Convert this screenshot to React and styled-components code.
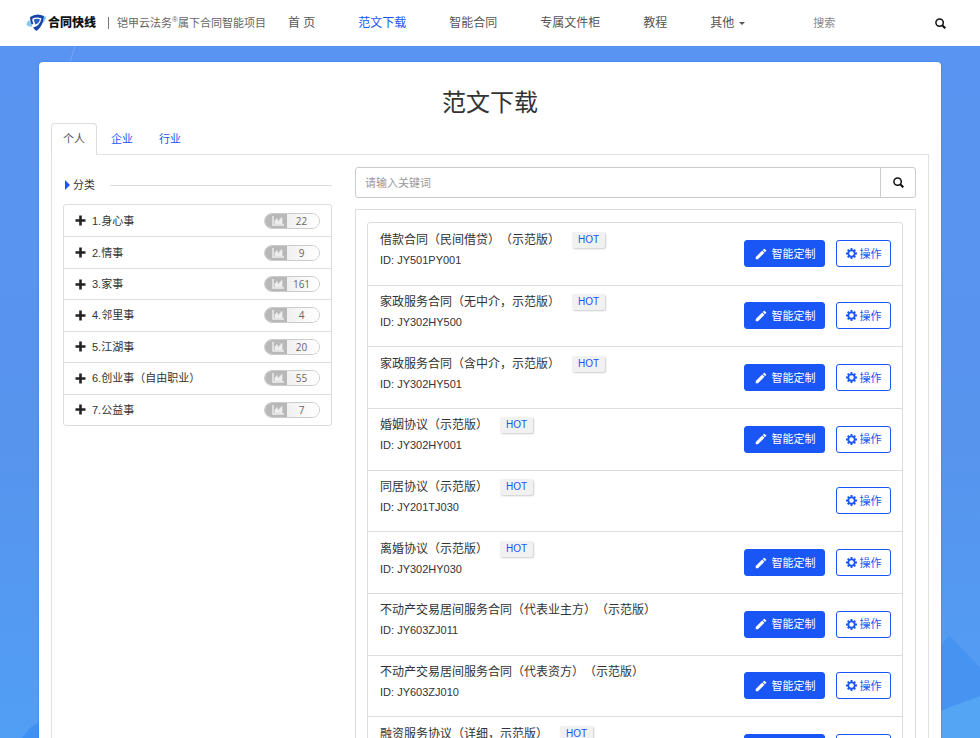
import React from "react";
import styled, { createGlobalStyle } from "styled-components";
import { MdEdit } from "react-icons/md";

const categories = [
  { name: "1.身心事", count: 22 },
  { name: "2.情事", count: 9 },
  { name: "3.家事", count: 161 },
  { name: "4.邻里事", count: 4 },
  { name: "5.江湖事", count: 20 },
  { name: "6.创业事（自由职业）", count: 55 },
  { name: "7.公益事", count: 7 },
];

const documents = [
  { title: "借款合同（民间借贷）（示范版）", id: "JY501PY001", hot: true, custom: true },
  { title: "家政服务合同（无中介，示范版）", id: "JY302HY500", hot: true, custom: true },
  { title: "家政服务合同（含中介，示范版）", id: "JY302HY501", hot: true, custom: true },
  { title: "婚姻协议（示范版）", id: "JY302HY001", hot: true, custom: true },
  { title: "同居协议（示范版）", id: "JY201TJ030", hot: true, custom: false },
  { title: "离婚协议（示范版）", id: "JY302HY030", hot: true, custom: true },
  { title: "不动产交易居间服务合同（代表业主方）（示范版）", id: "JY603ZJ011", hot: false, custom: true },
  { title: "不动产交易居间服务合同（代表资方）（示范版）", id: "JY603ZJ010", hot: false, custom: true },
  { title: "融资服务协议（详细，示范版）", hot: true, custom: true },
];

const SearchIcon = () => (
  <svg width="11" height="11" viewBox="0 0 11 11" fill="none" stroke="currentColor" aria-hidden="true">
    <circle cx="4.6" cy="4.6" r="3.7" strokeWidth="1.5" />
    <path d="M7.3 7.3 L10.3 10.3" strokeWidth="2.1" />
  </svg>
);

const PlusIcon = () => (
  <svg width="11" height="11" viewBox="0 0 11 11" fill="none" stroke="#222" aria-hidden="true">
    <path d="M5.5 0.5v10M0.5 5.5h10" strokeWidth="2.6" />
  </svg>
);

const GearIcon = () => (
  <svg width="11" height="11" viewBox="0 0 22 22" fill="none" stroke="currentColor" aria-hidden="true">
    <circle cx="11" cy="11" r="6.4" strokeWidth="3.6" />
    <path
      d="M11 0v4M11 18v4M0 11h4M18 11h4M3.4 3.4l2.6 2.6M16 16l2.6 2.6M18.6 3.4l-2.6 2.6M6 16l-2.6 2.6"
      strokeWidth="3.8"
    />
  </svg>
);

const ChartIcon = () => (
  <svg width="12" height="10" viewBox="0 0 12 10" aria-hidden="true">
    <path d="M1 0v9h11" fill="none" stroke="currentColor" strokeWidth="1.4" />
    <path d="M2.6 8V4H4V2.4H5.6V4.4H7.4V3H8.6V1.6H10.4V8Z" fill="currentColor" />
  </svg>
);

const LogoMark = () => (
  <svg width="22" height="18" viewBox="0 0 44 36" aria-hidden="true">
    <path d="M6 12 Q-3 21 4 24 Q8 26 13 25 L10 18Z" fill="#86c8f4" />
    <path d="M35 4 Q42 5 40 9 Q37 16 31 20 L33 9Z" fill="#86c8f4" />
    <path d="M8 6 Q21 -3 36 4 L34 15 Q31 26 21 34 Q17 31 14 27 Q27 25 31 9 Q22 5 13 9 Q12 15 15 20 L11 21 Q8 15 8 6Z" fill="#1746a8" />
    <path d="M16 11 Q22 8 28 11 Q26 19 19 21 Q16 17 16 11Z" fill="#2a5fc2" />
  </svg>
);

const App = () => {
  return (
    <>
      <GlobalStyle />
      <Header>
        <Brand href="#">
          <LogoMark />
          <BrandName>合同快线</BrandName>
        </Brand>
        <Slogan>
          铠甲云法务<Sup>®</Sup>属下合同智能项目
        </Slogan>
        <Nav aria-label="主导航">
          <NavLink href="#">首 页</NavLink>
          <NavLink href="#" $active>范文下载</NavLink>
          <NavLink href="#">智能合同</NavLink>
          <NavLink href="#">专属文件柜</NavLink>
          <NavLink href="#">教程</NavLink>
          <NavLink href="#">其他<Caret /></NavLink>
        </Nav>
        <SiteSearch role="search">
          <SiteInput type="text" placeholder="搜索" aria-label="搜索" />
          <IconButton type="submit" aria-label="搜索"><SearchIcon /></IconButton>
        </SiteSearch>
      </Header>

      <Main>
        <Backdrop viewBox="0 0 980 692" preserveAspectRatio="none" aria-hidden="true">
          <path d="M940 602 L949 589 L980 622 V692 H940Z" fill="#4793f2" />
          <path d="M940 665 L980 650 V692 H940Z" fill="#54a6f5" />
          <path d="M22 692 L30 682 L39 676 V692Z" fill="#3f90f5" />
          <path d="M70 16 L75 0" stroke="#74a9f5" />
        </Backdrop>
        <Card>
          <Title>范文下载</Title>
          <Tabs>
            <Tab href="#" $active>个人</Tab>
            <Tab href="#">企业</Tab>
            <Tab href="#">行业</Tab>
          </Tabs>
          <Panel>
            <Sidebar>
              <Legend>
                <Arrow />
                分类
                <Rule />
              </Legend>
              <CategoryList>
                {categories.map((item) => (
                  <Category key={item.name}>
                    <PlusIcon />
                    <CategoryName>{item.name}</CategoryName>
                    <Counter>
                      <CounterIcon><ChartIcon /></CounterIcon>
                      <CounterValue>{item.count}</CounterValue>
                    </Counter>
                  </Category>
                ))}
              </CategoryList>
            </Sidebar>

            <Content>
              <KeywordSearch role="search">
                <KeywordInput type="text" placeholder="请输入关键词" aria-label="请输入关键词" />
                <KeywordButton type="submit" aria-label="搜索"><SearchIcon /></KeywordButton>
              </KeywordSearch>
              <Results>
                <DocumentList>
                  {documents.map((doc) => (
                    <DocumentRow key={doc.title}>
                      <DocumentInfo>
                        <DocumentTitle>
                          {doc.title}
                          {doc.hot && <Hot>HOT</Hot>}
                        </DocumentTitle>
                        {doc.id && <DocumentId>ID: {doc.id}</DocumentId>}
                      </DocumentInfo>
                      {doc.custom && (
                        <Button type="button" $primary>
                          <MdEdit size={14} />
                          智能定制
                        </Button>
                      )}
                      <Button type="button">
                        <GearIcon />
                        操作
                      </Button>
                    </DocumentRow>
                  ))}
                </DocumentList>
              </Results>
            </Content>
          </Panel>
        </Card>
      </Main>
    </>
  );
};

export default App;

const GlobalStyle = createGlobalStyle`
  * {
    box-sizing: border-box;
  }

  html {
    scrollbar-width: none;
  }

  body {
    margin: 0;
    color: #333;
    font-family: "Liberation Sans", "Noto Sans CJK SC", sans-serif;
    font-size: 11px;
    line-height: 16px;
    text-spacing-trim: space-all;
  }

  button,
  input {
    font: inherit;
  }

  a {
    text-decoration: none;
  }
`

const Header = styled.header`
  display: flex;
  align-items: center;
  height: 46px;
  padding: 0 24px 0 26px;
  background: #fff;
  white-space: nowrap;
`

const Brand = styled.a`
  display: flex;
  align-items: center;
  color: #111;
`

const BrandName = styled.span`
  font-size: 12px;
  font-weight: 900;
`

const Slogan = styled.span`
  margin-left: 12px;
  padding-left: 8px;
  border-left: 1px solid #777;
  color: #666;
  line-height: 12px;
`

const Sup = styled.sup`
  font-size: 8px;
  line-height: 0;
`

const Nav = styled.nav`
  display: flex;
  gap: 43px;
  margin-left: 22px;
`

const NavLink = styled.a`
  display: flex;
  align-items: center;
  color: ${({ $active }) => ($active ? "#1a56f5" : "#555")};
  font-size: 12px;
  line-height: 20px;
`

const Caret = styled.span`
  margin-left: 5px;
  border-top: 3px solid #555;
  border-right: 3px solid transparent;
  border-left: 3px solid transparent;
`

const SiteSearch = styled.form`
  display: flex;
  flex: 1;
  align-items: center;
  min-width: 0;
  margin-left: 68px;
`

const SiteInput = styled.input`
  flex: 1;
  min-width: 0;
  padding: 0;
  border: 0;
  outline: 0;
  background: transparent;

  &::placeholder {
    color: #888;
  }
`

const IconButton = styled.button`
  display: flex;
  padding: 10px;
  border: 0;
  background: transparent;
  color: #111;
`

const Main = styled.main`
  position: relative;
  min-height: calc(100vh - 46px);
  padding: 16px 39px;
  background: linear-gradient(#5a94f2, #5794ee 50%, #4fa2f8);
`

const Backdrop = styled.svg`
  position: absolute;
  top: 0;
  left: 0;
  width: 100%;
  height: calc(100vh - 46px);
`

const Card = styled.div`
  position: relative;
  padding: 24px 12px;
  border-radius: 4px;
  background: #fff;
  box-shadow: 0 0 2px #2878f0;
`

const Title = styled.h1`
  margin: 0;
  font-size: 24px;
  font-weight: 400;
  line-height: 34px;
  text-align: center;
`

const Tabs = styled.nav`
  display: flex;
  gap: 2px;
  margin-top: 3px;
`

const Tab = styled.a`
  margin-bottom: -1px;
  padding: 7px 11px 8px;
  border: 1px solid ${({ $active }) => ($active ? "#ddd" : "transparent")};
  border-bottom: 0;
  border-radius: 4px 4px 0 0;
  background: ${({ $active }) => ($active ? "#fff" : "transparent")};
  color: ${({ $active }) => ($active ? "#555" : "#1a56f5")};
  z-index: 1;
`

const Panel = styled.div`
  display: grid;
  grid-template-columns: minmax(0, 269fr) minmax(0, 561fr);
  gap: 23px;
  padding: 12px 12px 12px 11px;
  border: 1px solid #e2e2e2;
`

const Sidebar = styled.aside`
`

const Legend = styled.div`
  display: flex;
  align-items: center;
  gap: 3px;
  height: 36px;
  margin-bottom: 1px;
  padding-left: 2px;
`

const Arrow = styled.span`
  border-top: 5px solid transparent;
  border-bottom: 5px solid transparent;
  border-left: 5px solid #1a56f5;
`

const Rule = styled.span`
  flex: 1;
  height: 1px;
  margin-left: 12px;
  background: #ddd;
`

const CategoryList = styled.ul`
  display: grid;
  grid-auto-rows: 1fr;
  min-height: 222px;
  margin: 0;
  padding: 0;
  border: 1px solid #ddd;
  border-radius: 3px;
  list-style: none;
`

const Category = styled.li`
  display: flex;
  align-items: center;
  gap: 6px;
  padding: 0 11px;

  & + & {
    border-top: 1px solid #ddd;
  }
`

const CategoryName = styled.span`
  flex: 1;
`

const Counter = styled.span`
  display: flex;
  width: 56px;
  height: 16px;
  overflow: hidden;
  border: 1px solid #ccc;
  border-radius: 8px;
`

const CounterIcon = styled.span`
  display: flex;
  align-items: center;
  justify-content: center;
  width: 22px;
  padding-left: 3px;
  background: #b8b8b8;
  color: #eee;
`

const CounterValue = styled.span`
  flex: 1;
  padding-right: 3px;
  background: linear-gradient(90deg, #f0f0f0, #fff);
  color: #666;
  font-family: "Open Sans", sans-serif;
  font-size: 10px;
  line-height: 14px;
  text-align: center;
`

const Content = styled.section`
`

const KeywordSearch = styled.form`
  display: flex;
  height: 31px;
  border: 1px solid #ccc;
  border-radius: 3px;
`

const KeywordInput = styled.input`
  flex: 1;
  min-width: 0;
  padding: 0 9px;
  border: 0;
  outline: 0;
  background: transparent;

  &::placeholder {
    color: #999;
  }
`

const KeywordButton = styled.button`
  display: flex;
  align-items: center;
  justify-content: center;
  width: 35px;
  padding: 0;
  border: 0;
  border-left: 1px solid #ccc;
  background: transparent;
  color: #111;
`

const Results = styled.div`
  margin-top: 11px;
  padding: 12px 12px 12px 11px;
  border: 1px solid #ddd;
`

const DocumentList = styled.ul`
  display: grid;
  grid-auto-rows: 1fr;
  min-height: 557px;
  margin: 0;
  padding: 0;
  border: 1px solid #ddd;
  border-radius: 3px;
  list-style: none;
`

const DocumentRow = styled.li`
  display: flex;
  align-items: center;
  padding: 0 11px 0 12px;

  & + & {
    border-top: 1px solid #ddd;
  }
`

const DocumentInfo = styled.div`
  flex: 1;
  height: 48px;
`

const DocumentTitle = styled.div`
  display: flex;
  align-items: center;
  gap: 12px;
  height: 20px;
  font-size: 12px;
`

const Hot = styled.span`
  padding: 0 6px;
  border-radius: 2px;
  background: #f1f1f1;
  box-shadow: 1px 1px 2px #ccc;
  color: #1a56f5;
  font-size: 10px;
`

const DocumentId = styled.div`
  line-height: 20px;
`

const Button = styled.button`
  display: flex;
  align-items: center;
  justify-content: center;
  gap: ${({ $primary }) => ($primary ? 4 : 3)}px;
  width: ${({ $primary }) => ($primary ? 81 : 55)}px;
  height: 27px;
  margin-left: 11px;
  padding: 0;
  border: 1px solid #1a56f5;
  border-radius: 3px;
  background: ${({ $primary }) => ($primary ? "#1a56f5" : "#fff")};
  color: ${({ $primary }) => ($primary ? "#fff" : "#1a56f5")};
`
